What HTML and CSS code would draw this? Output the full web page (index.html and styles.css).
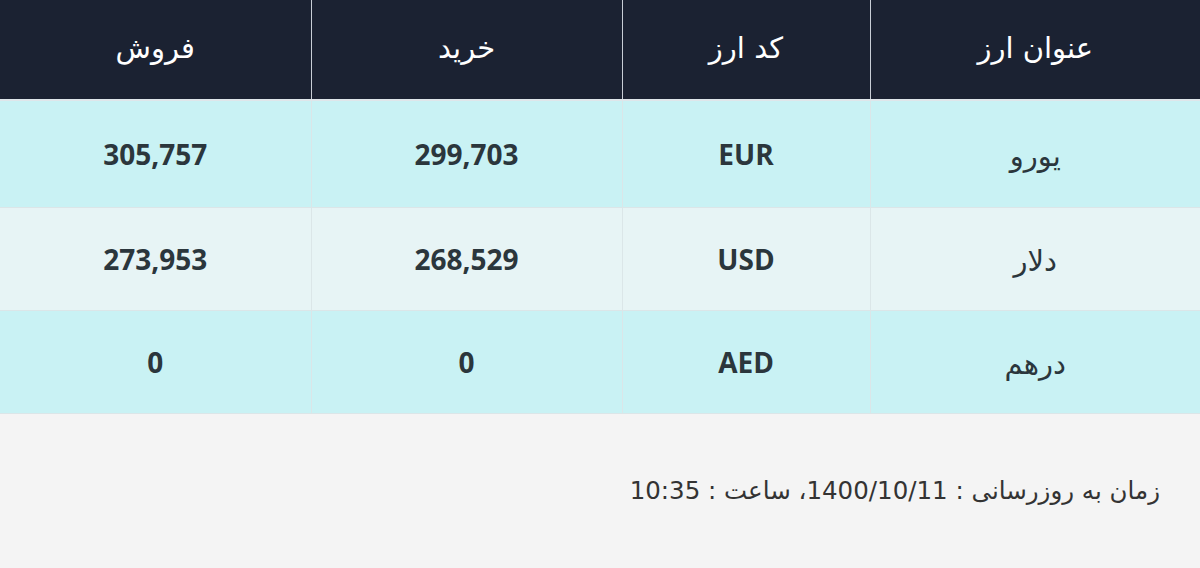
FILE: index.html
```html
<!DOCTYPE html>
<html lang="fa" dir="rtl">
<head>
    <meta charset="UTF-8">
    <meta name="viewport" content="width=device-width, initial-scale=1.0">
    <title>نرخ ارز</title>
    <link rel="stylesheet" href="styles.css">
</head>
<body>
    <table class="rates">
        <colgroup>
            <col class="col-title">
            <col class="col-code">
            <col class="col-buy">
            <col class="col-sell">
        </colgroup>
        <thead>
            <tr>
                <th>عنوان ارز</th>
                <th>کد ارز</th>
                <th>خرید</th>
                <th>فروش</th>
            </tr>
        </thead>
        <tbody>
            <tr class="row-a first">
                <td class="name">یورو</td>
                <td>EUR</td>
                <td>299,703</td>
                <td>305,757</td>
            </tr>
            <tr class="row-b">
                <td class="name">دلار</td>
                <td>USD</td>
                <td>268,529</td>
                <td>273,953</td>
            </tr>
            <tr class="row-a">
                <td class="name">درهم</td>
                <td>AED</td>
                <td>0</td>
                <td>0</td>
            </tr>
        </tbody>
    </table>
    <p class="updated">زمان به روزرسانی : 1400/10/11، ساعت : 10:35</p>
</body>
</html>
```

FILE: styles.css
```css
body {
    margin: 0;
    background-color: #f4f4f4;
    font-family: "Open Sans", "DejaVu Sans", sans-serif;
    color: #2b363c;
}
.rates {
    width: 1200px;
    border-collapse: collapse;
    table-layout: fixed;
}
.col-title { width: 330px; }
.col-code { width: 248px; }
.col-buy { width: 311px; }
.col-sell { width: 311px; }
.rates th {
    height: 95px;
    background-color: #1b2232;
    color: #ffffff;
    font-family: "DejaVu Sans", sans-serif;
    font-size: 29px;
    font-weight: normal;
    border-left: 1px solid #c9ced6;
    border-bottom: 2px solid #dfe6ea;
    padding: 0 0 4px;
}
.rates th:last-child {
    border-left: none;
}
.rates td {
    height: 98px;
    text-align: center;
    font-size: 28px;
    font-weight: bold;
    border-left: 1px solid #dbe6e8;
    border-bottom: 1px solid #dbe6e8;
    padding: 0;
}
.rates td:last-child {
    border-left: none;
}
.rates td.name {
    font-family: "DejaVu Sans", sans-serif;
    font-weight: normal;
    font-size: 29px;
    line-height: 30px;
    padding-top: 4px;
}
.rates .first td {
    height: 102px;
}
.row-a td {
    background-color: #c9f2f4;
}
.row-b td {
    background-color: #e7f4f5;
}
.updated {
    margin: 0;
    padding: 62px 40px 0 0;
    font-family: "DejaVu Sans", "Liberation Sans", sans-serif;
    font-size: 24.5px;
    color: #333333;
}
```
